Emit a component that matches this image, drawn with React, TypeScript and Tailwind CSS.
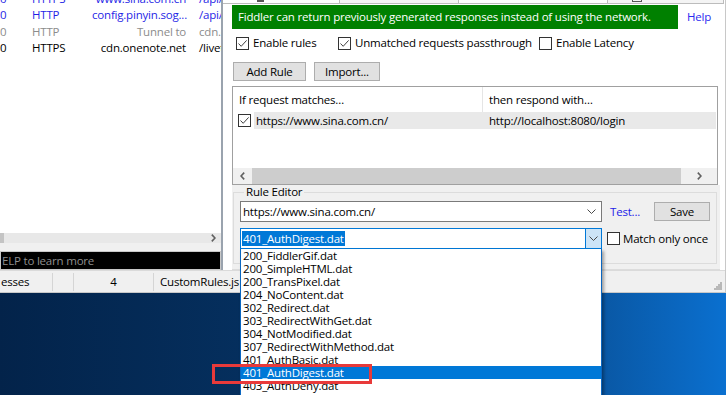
import React from "react";

const SESSIONS = [
  { proto: "HTTPS", host: "www.sina.com.cn", url: "/api/app/", color: "text-[#1f1fe6]" },
  { proto: "HTTP", host: "config.pinyin.sog...", url: "/api/toolbox/", color: "text-[#1f1fe6]" },
  { proto: "HTTP", host: "Tunnel to", url: "cdn.onenote.net:443", color: "text-[#8c8c8c]" },
  { proto: "HTTPS", host: "cdn.onenote.net", url: "/livetile/", color: "text-black" },
];

const RESPONSES = [
  "200_FiddlerGif.dat",
  "200_SimpleHTML.dat",
  "200_TransPixel.dat",
  "204_NoContent.dat",
  "302_Redirect.dat",
  "303_RedirectWithGet.dat",
  "304_NotModified.dat",
  "307_RedirectWithMethod.dat",
  "401_AuthBasic.dat",
  "401_AuthDigest.dat",
  "403_AuthDeny.dat",
  "404_Plain.dat",
];

function Check({ on }: { on?: boolean }) {
  return (
    <span className="flex h-[13px] w-[13px] shrink-0 items-center justify-center border border-[#333333] bg-white">
      {on && (
        <svg width="11" height="11" viewBox="0 0 11 11">
          <path d="M1.5 5.5 L4.2 8.3 L9.6 2.4" fill="none" stroke="#404040" strokeWidth="1" />
        </svg>
      )}
    </span>
  );
}

function Chevron() {
  return (
    <svg width="9" height="5" viewBox="0 0 9 5">
      <path d="M0.5 0.5 L4.5 4.5 L8.5 0.5" fill="none" stroke="#4a4a4a" strokeWidth="1" />
    </svg>
  );
}

function Arrow({ dir }: { dir: "left" | "right" }) {
  return (
    <svg width="5" height="8" viewBox="0 0 5 8">
      <path
        d={dir === "left" ? "M4.2 0.6 L1 4 L4.2 7.4" : "M0.8 0.6 L4 4 L0.8 7.4"}
        fill="none"
        stroke="#606060"
        strokeWidth="1.6"
      />
    </svg>
  );
}

function LeftPane() {
  return (
    <div className="flex h-full w-[221px] shrink-0 flex-col overflow-hidden bg-[#f0f0f0]">
      {/* Session list */}
      <div className="flex-1 overflow-hidden bg-white">
        <div className="-mt-[10px] flex flex-col">
          {SESSIONS.map((s, i) => (
            <div key={i} className={`flex h-[16.5px] items-center whitespace-nowrap ${s.color}`}>
              <span className="w-[32px] shrink-0">0</span>
              <span className="w-[60px] shrink-0">{s.proto}</span>
              <span className="w-[100px] shrink-0 pr-[6px] text-right">{s.host}</span>
              <span className="shrink-0 pl-[7px]">{s.url}</span>
            </div>
          ))}
        </div>
      </div>
      {/* Horizontal scrollbar */}
      <div className="flex h-[10px] items-center bg-[#e8e8e8]">
        <div className="h-full w-[4px] bg-[#c4c4c4]" />
        <div className="ml-auto mr-[5px] flex">
          <Arrow dir="right" />
        </div>
      </div>
      <div className="h-[8px]" />
      {/* QuickExec */}
      <div className="flex h-[19px] items-center border border-[#c8c8c8] bg-black pl-[1px] whitespace-nowrap text-[#8f8f8f]">
        ELP to learn more
      </div>
    </div>
  );
}

function TabStrip() {
  return (
    <div className="flex h-[5px] items-start">
      <div className="relative h-[4px] w-[116px] border-b border-[#bcbcbc]">
        <div className="absolute left-[34px] top-0 h-[2px] w-[7px] bg-[#555555]" />
      </div>
      <div className="h-[4px] w-[120px] border-x border-b border-[#bcbcbc] bg-[#f4f4f4]" />
      <div className="h-[4px] w-[148px] border-b border-[#bcbcbc]" />
      <div className="relative h-[4px] w-[117px] border-x border-b border-[#bcbcbc] bg-[#f4f4f4]">
        <div className="absolute left-[24px] top-0 h-[2px] w-[10px] border-x border-b border-[#555555]" />
      </div>
    </div>
  );
}

function RuleList() {
  return (
    <div className="ml-[9px] mt-[5px] flex h-[99px] w-[486px] flex-col border border-[#a0a0a0] bg-white">
      <div className="flex h-[25px] shrink-0 items-center">
        <div className="flex h-full w-[250px] items-center border-r border-[#e5e5e5] pl-[6px]">
          If request matches…
        </div>
        <div className="pl-[6px]">then respond with…</div>
      </div>
      <div className="flex h-[17px] shrink-0 items-center pl-[5px]">
        <Check on />
        <div className="ml-[3px] mr-[1px] flex h-full flex-1 items-center bg-[#e9e9e9]">
          <div className="w-[229px] pl-[2px]">https://www.sina.com.cn/</div>
          <div className="pl-[6px]">http://localhost:8080/login</div>
        </div>
      </div>
      <div className="flex-1" />
      <div className="flex h-[16px] shrink-0 items-center bg-[#f0f0f0]">
        <div className="flex h-full w-[19px] items-center justify-center">
          <Arrow dir="left" />
        </div>
        <div className="h-full w-[429px] bg-[#cdcdcd]" />
        <div className="flex h-full flex-1 items-center justify-center">
          <Arrow dir="right" />
        </div>
      </div>
    </div>
  );
}

function RuleEditor() {
  return (
    <div className="ml-[9px] h-[85px] w-[488px] border-b border-[#dcdcdc] bg-[#f0f0f0] pl-[1px]">
      <fieldset className="h-[79px] w-[484px] border border-[#dcdcdc] pl-[6px]">
        <legend className="ml-[4px] px-[2px] leading-[14px]">Rule Editor</legend>
        <div className="mt-[2px] flex h-[21px] items-center">
          <div className="flex h-[21px] w-[362px] items-center border border-[#7a7a7a] bg-white pl-[2px] pr-[5px]">
            <span className="flex-1">https://www.sina.com.cn/</span>
            <Chevron />
          </div>
          <span className="ml-[8px] text-[#2323e8]">Test...</span>
          <button className="ml-auto mr-[6px] flex h-[19px] w-[56px] items-center justify-center border border-[#adadad] bg-[#e1e1e1]">
            Save
          </button>
        </div>
        <div className="mt-[6px] flex h-[21px] items-center">
          <div className="flex h-[21px] w-[362px] items-center border border-[#0078d7] bg-white">
            <div className="flex-1 pl-[1px]">
              <span className="inline-block bg-[#0078d7] px-[1px] leading-[15px] text-white">
                401_AuthDigest.dat
              </span>
            </div>
            <div className="flex h-full w-[16px] items-center justify-center border-l border-[#0078d7] bg-[#cce4f7]">
              <Chevron />
            </div>
          </div>
          <span className="ml-[5px]">
            <Check />
          </span>
          <span className="ml-[3px]">Match only once</span>
        </div>
      </fieldset>
    </div>
  );
}

function RightPane() {
  return (
    <div className="flex h-full flex-1 flex-col bg-white">
      <TabStrip />
      <div className="flex h-[24px] items-center pl-[9px]">
        <div className="flex h-full w-[446px] items-center bg-[#008000] pl-[6px] whitespace-nowrap text-white">
          Fiddler can return previously generated responses instead of using the network.
        </div>
        <span className="ml-[9px] text-[#2a2af0]">Help</span>
      </div>
      <div className="mt-[7px] flex h-[14px] items-center pl-[13px] whitespace-nowrap">
        <div className="flex w-[102px] items-center gap-[4px]">
          <Check on />
          Enable rules
        </div>
        <div className="flex w-[201px] items-center gap-[4px]">
          <Check on />
          Unmatched requests passthrough
        </div>
        <div className="flex items-center gap-[4px]">
          <Check />
          Enable Latency
        </div>
      </div>
      <div className="mt-[12px] flex h-[19px] gap-[8px] pl-[10px]">
        <button className="flex h-full w-[73px] items-center justify-center border border-[#adadad] bg-[#e1e1e1]">
          Add Rule
        </button>
        <button className="flex h-full w-[66px] items-center justify-center border border-[#adadad] bg-[#e1e1e1]">
          Import...
        </button>
      </div>
      <RuleList />
      <RuleEditor />
    </div>
  );
}

function Grip() {
  return (
    <svg width="8" height="8" viewBox="0 0 8 8">
      {[
        [6, 0],
        [4, 2],
        [6, 2],
        [2, 4],
        [4, 4],
        [6, 4],
        [0, 6],
        [2, 6],
        [4, 6],
        [6, 6],
      ].map(([x, y], i) => (
        <rect key={i} x={x} y={y} width="2" height="2" fill="#b8b8b8" />
      ))}
    </svg>
  );
}

function StatusBar() {
  return (
    <div className="flex h-[23px] items-center border-t border-[#dadada] bg-[#f0f0f0] whitespace-nowrap">
      <div className="w-[52px] pl-[1px]">esses</div>
      <div className="h-[18px] w-px bg-[#d5d5d5]" />
      <div className="w-[20px]" />
      <div className="h-[18px] w-px bg-[#d5d5d5]" />
      <div className="w-[79px] text-center">4</div>
      <div className="h-[18px] w-px bg-[#d5d5d5]" />
      <div className="flex-1 overflow-hidden pl-[6px]">CustomRules.js was loaded at: Wed Jul 10</div>
      <div className="mr-[3px] mt-[8px] self-center">
        <Grip />
      </div>
    </div>
  );
}

function ResponseDropdown() {
  return (
    <div className="absolute left-[240px] top-[249px] w-[362px] border-x border-b border-[#0a66c0] bg-white shadow-[2px_2px_3px_rgba(0,0,0,0.35)]">
      {RESPONSES.map((r) => (
        <div
          key={r}
          className={
            r === "401_AuthDigest.dat"
              ? "flex h-[13px] items-center bg-[#0078d7] pl-[2px] text-white"
              : "flex h-[13px] items-center pl-[2px]"
          }
        >
          {r}
        </div>
      ))}
    </div>
  );
}

export default function App() {
  return (
    <div className="relative flex h-[395px] w-[726px] flex-col overflow-hidden font-['Open_Sans',sans-serif] text-[11.5px] tracking-[-0.2px] text-black">
      <div className="flex h-[293px] shrink-0 flex-col border-r border-b border-[#c8c8c8] bg-[#f0f0f0]">
        <div className="flex h-[270px]">
          <LeftPane />
          <div className="h-full w-[2px] bg-[#9aa3ae]" />
          <RightPane />
        </div>
        <StatusBar />
      </div>
      <div className="flex-1 bg-linear-to-r from-[#03234a] via-[#07396e] via-60% to-[#0a70d0]" />
      <ResponseDropdown />
      <div className="absolute left-[212px] top-[364px] h-[20px] w-[160px] border-[3px] border-[#e83a3a]" />
    </div>
  );
}
